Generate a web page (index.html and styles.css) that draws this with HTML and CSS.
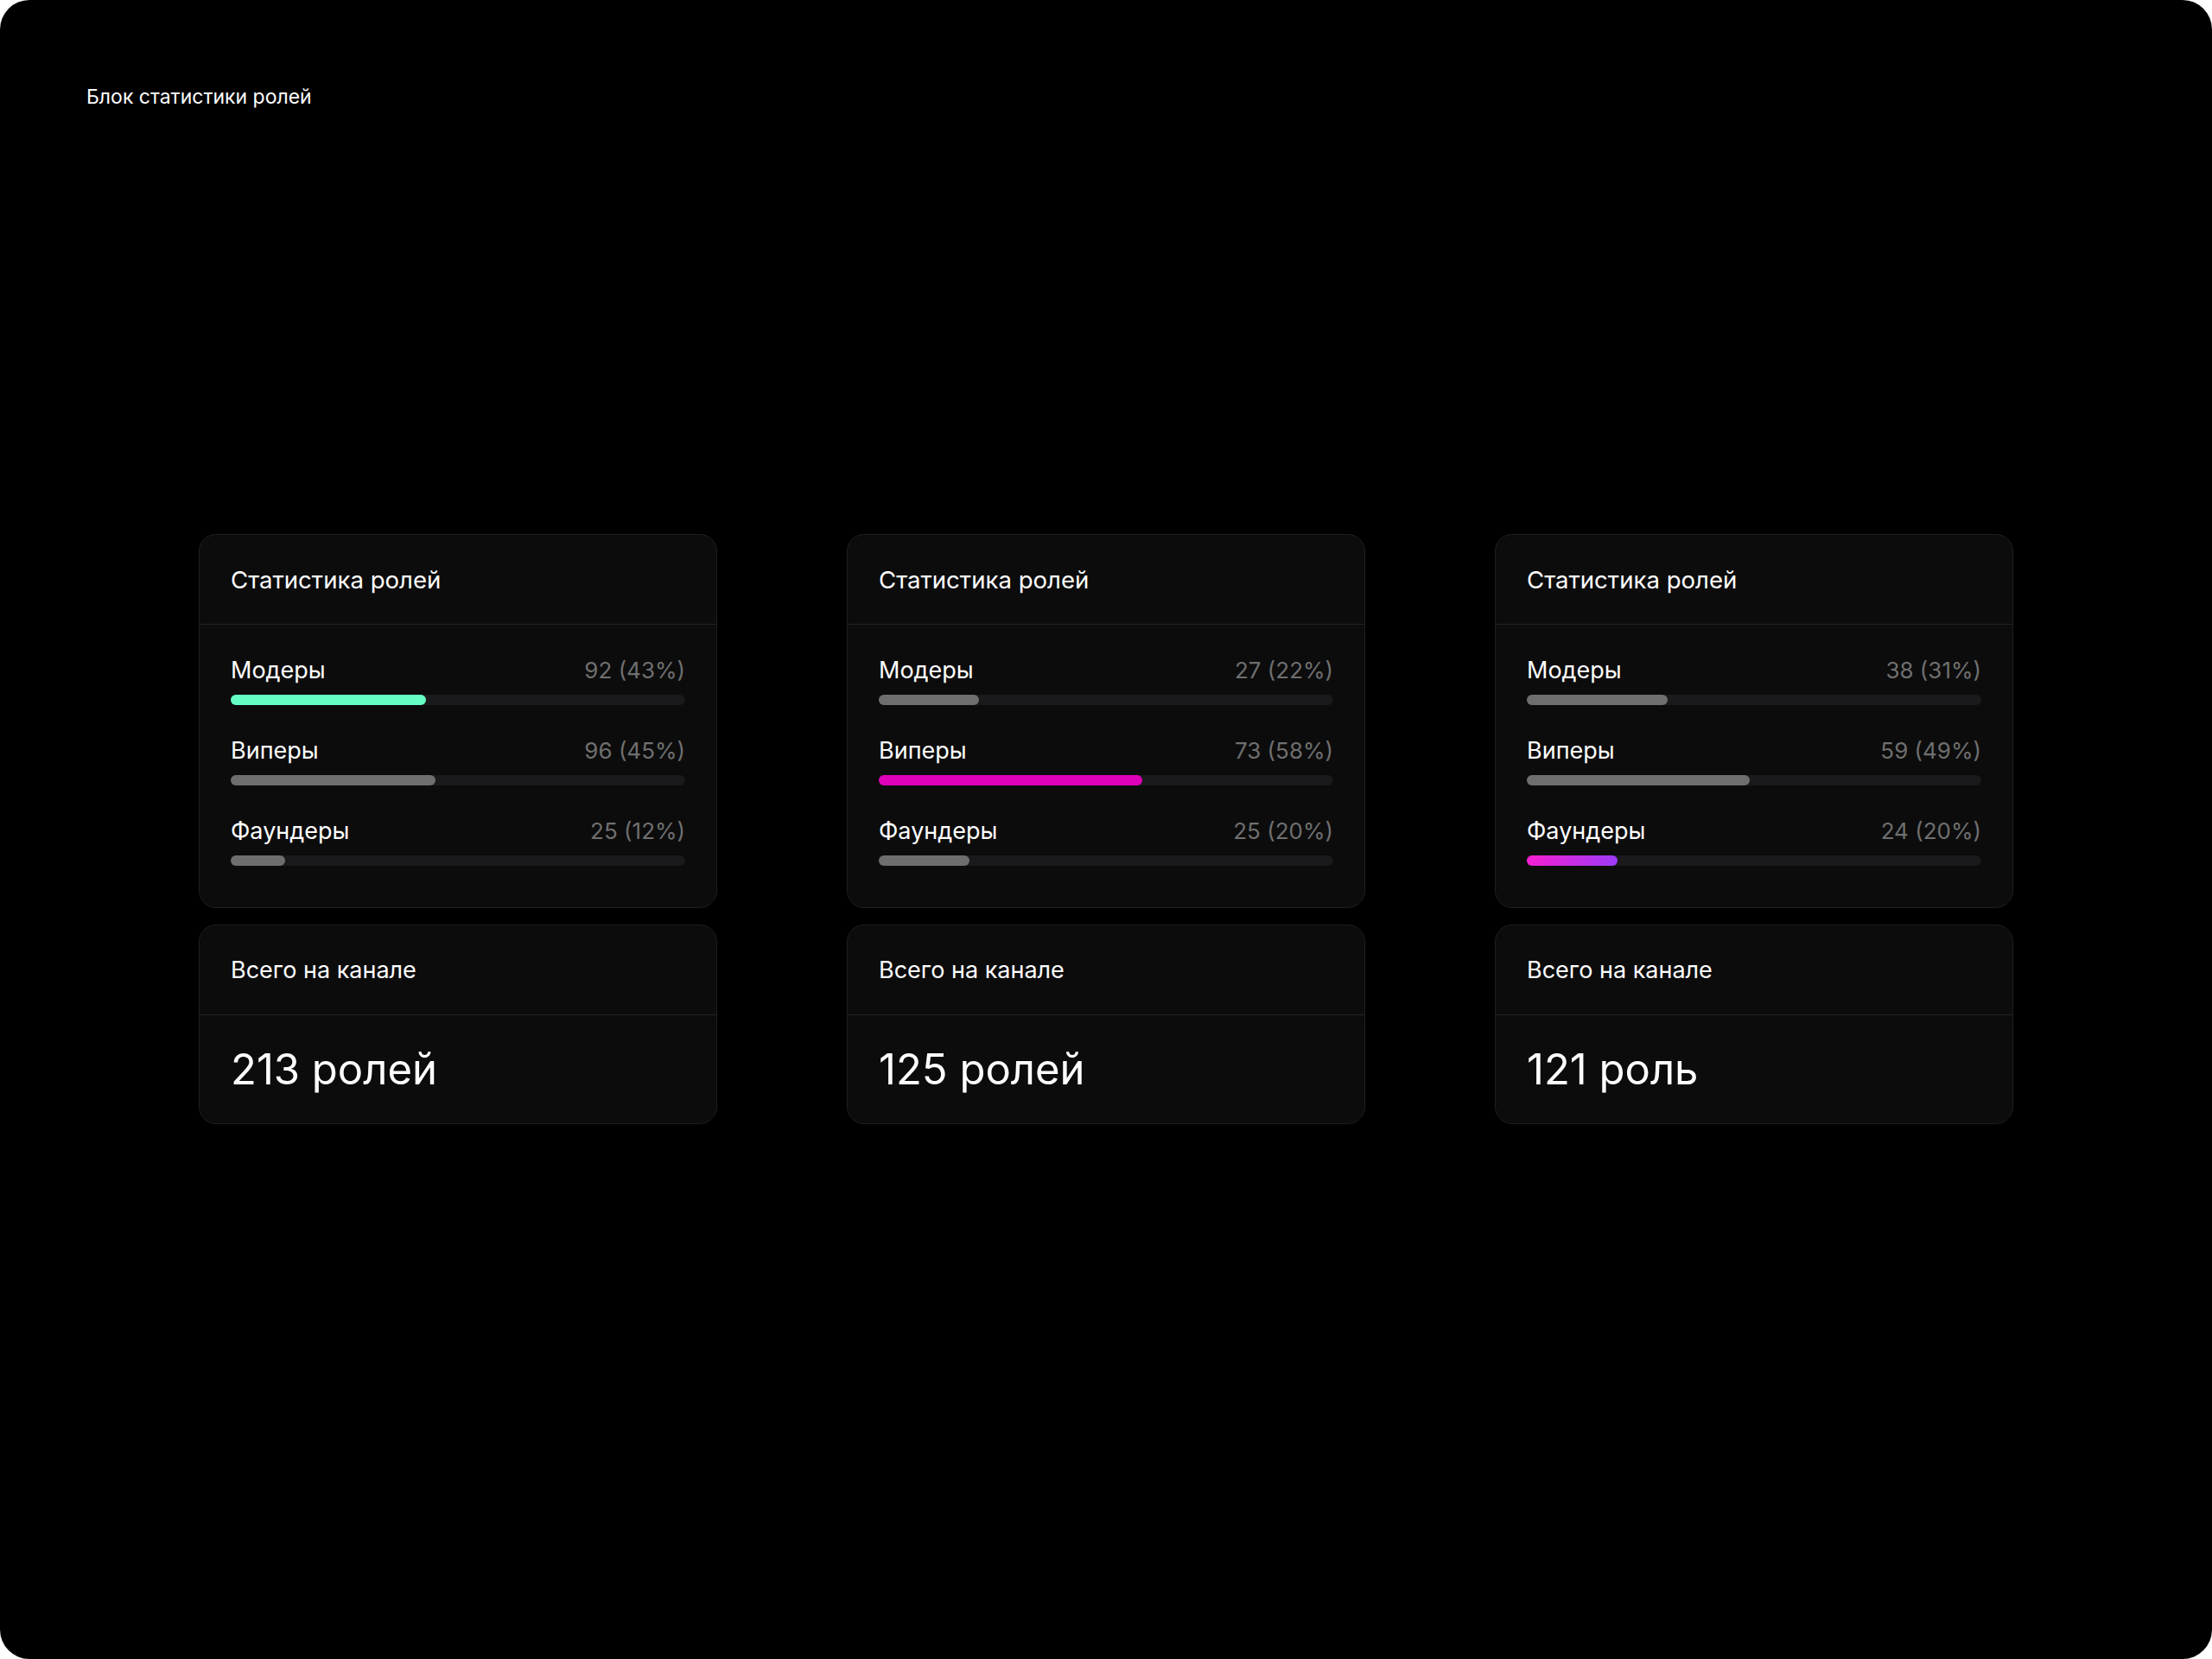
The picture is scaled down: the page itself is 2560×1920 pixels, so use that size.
FILE: index.html
```html
<!DOCTYPE html>
<html lang="ru">
<head>
  <meta charset="UTF-8">
  <meta name="viewport" content="width=device-width, initial-scale=1.0">
  <title>Блок статистики ролей</title>
  <link rel="stylesheet" href="styles.css">
</head>
<body>
  <div class="frame">
    <h1 class="page-title">Блок статистики ролей</h1>

    <div class="stats">
      <!-- вариант 1: модеры -->
      <div class="column">
        <div class="card">
          <div class="card-head card-head-roles">Статистика ролей</div>
          <div class="card-body roles">
            <div class="role">
              <div class="role-line"><span class="role-name">Модеры</span><span class="role-value">92 (43%)</span></div>
              <div class="track"><div class="fill fill-green" style="width: 43%"></div></div>
            </div>
            <div class="role">
              <div class="role-line"><span class="role-name">Виперы</span><span class="role-value">96 (45%)</span></div>
              <div class="track"><div class="fill" style="width: 45%"></div></div>
            </div>
            <div class="role">
              <div class="role-line"><span class="role-name">Фаундеры</span><span class="role-value">25 (12%)</span></div>
              <div class="track"><div class="fill" style="width: 12%"></div></div>
            </div>
          </div>
        </div>
        <div class="card">
          <div class="card-head">Всего на канале</div>
          <div class="card-body total">213 ролей</div>
        </div>
      </div>

      <!-- вариант 2: виперы -->
      <div class="column">
        <div class="card">
          <div class="card-head card-head-roles">Статистика ролей</div>
          <div class="card-body roles">
            <div class="role">
              <div class="role-line"><span class="role-name">Модеры</span><span class="role-value">27 (22%)</span></div>
              <div class="track"><div class="fill" style="width: 22%"></div></div>
            </div>
            <div class="role">
              <div class="role-line"><span class="role-name">Виперы</span><span class="role-value">73 (58%)</span></div>
              <div class="track"><div class="fill fill-magenta" style="width: 58%"></div></div>
            </div>
            <div class="role">
              <div class="role-line"><span class="role-name">Фаундеры</span><span class="role-value">25 (20%)</span></div>
              <div class="track"><div class="fill" style="width: 20%"></div></div>
            </div>
          </div>
        </div>
        <div class="card">
          <div class="card-head">Всего на канале</div>
          <div class="card-body total">125 ролей</div>
        </div>
      </div>

      <!-- вариант 3: фаундеры -->
      <div class="column">
        <div class="card">
          <div class="card-head card-head-roles">Статистика ролей</div>
          <div class="card-body roles">
            <div class="role">
              <div class="role-line"><span class="role-name">Модеры</span><span class="role-value">38 (31%)</span></div>
              <div class="track"><div class="fill" style="width: 31%"></div></div>
            </div>
            <div class="role">
              <div class="role-line"><span class="role-name">Виперы</span><span class="role-value">59 (49%)</span></div>
              <div class="track"><div class="fill" style="width: 49%"></div></div>
            </div>
            <div class="role">
              <div class="role-line"><span class="role-name">Фаундеры</span><span class="role-value">24 (20%)</span></div>
              <div class="track"><div class="fill fill-gradient" style="width: 20%"></div></div>
            </div>
          </div>
        </div>
        <div class="card">
          <div class="card-head">Всего на канале</div>
          <div class="card-body total">121 роль</div>
        </div>
      </div>
    </div>
  </div>
</body>
</html>
```

FILE: styles.css
```css
* {
  box-sizing: border-box;
}

body {
  margin: 0;
  padding: 0;
  background-color: #ffffff;
  font-family: Inter, "Noto Sans", sans-serif;
  color: #ffffff;
}

.frame {
  width: 2560px;
  height: 1920px;
  padding: 98px 100px;
  background-color: #000000;
  border-radius: 34px;
  display: flex;
  flex-direction: column;
}

.page-title {
  margin: 0;
  font-size: 23px;
  line-height: 29px;
  font-weight: 400;
}

.stats {
  display: flex;
  justify-content: center;
  gap: 150px;
  margin-top: 491px;
}

.column {
  width: 600px;
  display: flex;
  flex-direction: column;
  gap: 19px;
}

.card {
  background-color: #0c0c0c;
  border: 1px solid #1f1f1f;
  border-radius: 20px;
}

.card-head {
  height: 104px;
  padding: 0 36px;
  display: flex;
  align-items: center;
  border-bottom: 1px solid #222222;
  font-size: 27px;
  line-height: 32px;
}

.card-head-roles {
  font-size: 27.6px;
}

.roles {
  padding: 36px 36px 48px;
  display: flex;
  flex-direction: column;
  gap: 36px;
}

.role-line {
  display: flex;
  justify-content: space-between;
  align-items: baseline;
  font-size: 27px;
  line-height: 34px;
}

.role-value {
  color: #6f6f6f;
  font-size: 26px;
}

.track {
  margin-top: 11px;
  height: 12px;
  border-radius: 6px;
  background-color: #1a1a1c;
}

.fill {
  height: 100%;
  border-radius: 6px;
  background-color: #6e6e6e;
}

.fill-green {
  background-color: #64fdc3;
}

.fill-magenta {
  background-color: #df00b9;
}

.fill-gradient {
  background: linear-gradient(90deg, #f61fd2, #9c3bf6);
}

.total {
  padding: 34px 36px 33px;
  font-size: 49px;
  line-height: 58px;
}
```
